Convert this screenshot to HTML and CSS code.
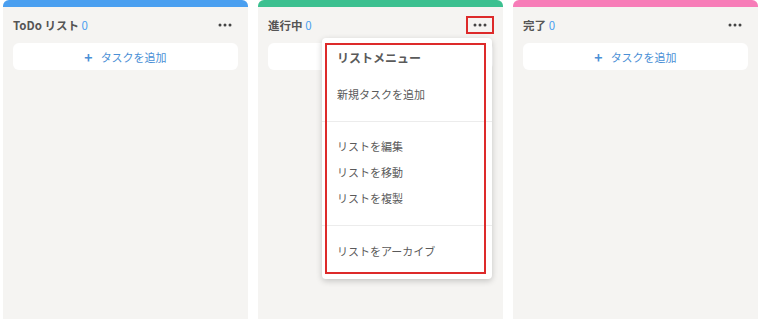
FILE: index.html
```html
<!DOCTYPE html>
<html lang="ja">
<head>
  <meta charset="UTF-8">
  <meta name="viewport" content="width=device-width, initial-scale=1.0">
  <title>ボード</title>
  <link rel="stylesheet" href="styles.css">
</head>
<body>

<div class="board">

  <!-- ToDo -->
  <div class="list list-todo">
    <div class="list-header">
      <span class="list-title">ToDo リスト <span class="count">0</span></span>
      <button class="more-button">
        <svg width="14" height="4" viewBox="0 0 14 4"><circle cx="2" cy="2" r="1.5"/><circle cx="7" cy="2" r="1.5"/><circle cx="12" cy="2" r="1.5"/></svg>
      </button>
    </div>
    <button class="add-task"><span class="plus">+</span>タスクを追加</button>
  </div>

  <!-- 進行中 -->
  <div class="list list-doing">
    <div class="list-header">
      <span class="list-title">進行中 <span class="count">0</span></span>
      <button class="more-button marked">
        <svg width="14" height="4" viewBox="0 0 14 4"><circle cx="2" cy="2" r="1.5"/><circle cx="7" cy="2" r="1.5"/><circle cx="12" cy="2" r="1.5"/></svg>
      </button>
    </div>
    <button class="add-task"><span class="plus">+</span>タスクを追加</button>

    <div class="list-menu">
      <div class="menu-title">リストメニュー</div>
      <div class="menu-section first">
        <div class="menu-item">新規タスクを追加</div>
      </div>
      <div class="menu-section">
        <div class="menu-item">リストを編集</div>
        <div class="menu-item">リストを移動</div>
        <div class="menu-item">リストを複製</div>
      </div>
      <div class="menu-section last">
        <div class="menu-item">リストをアーカイブ</div>
      </div>
      <div class="menu-mark"></div>
    </div>
  </div>

  <!-- 完了 -->
  <div class="list list-done">
    <div class="list-header">
      <span class="list-title">完了 <span class="count">0</span></span>
      <button class="more-button">
        <svg width="14" height="4" viewBox="0 0 14 4"><circle cx="2" cy="2" r="1.5"/><circle cx="7" cy="2" r="1.5"/><circle cx="12" cy="2" r="1.5"/></svg>
      </button>
    </div>
    <button class="add-task"><span class="plus">+</span>タスクを追加</button>
  </div>

</div>

</body>
</html>
```

FILE: styles.css
```css
body {
  font-family: "Noto Sans CJK JP", "Noto Sans", sans-serif;
  margin: 0;
  padding: 0;
  background-color: #ffffff;
  color: #555555;
}

.board {
  display: flex;
  gap: 10px;
  padding-left: 3px;
  height: 100vh;
  overflow: hidden;
}

.list {
  position: relative;
  width: 245px;
  flex-shrink: 0;
  background-color: #f5f4f2;
  border-top: 7px solid #4a9ff0;
  border-radius: 6px 6px 0 0;
  box-sizing: border-box;
}

.list-doing {
  border-top-color: #3cc090;
}

.list-done {
  border-top-color: #f77cb8;
}

.list-header {
  display: flex;
  justify-content: space-between;
  align-items: center;
  height: 36px;
  padding: 0 9px 0 10px;
}

.list-title {
  font-size: 11.5px;
  font-weight: bold;
  color: #555555;
}

.count {
  font-weight: normal;
  color: #4a9ff0;
}

.more-button {
  display: flex;
  align-items: center;
  justify-content: center;
  width: 28px;
  height: 18px;
  padding: 0;
  border: 2px solid transparent;
  background: none;
  fill: #444444;
  cursor: pointer;
}

.more-button.marked {
  border-color: #dd2a2a;
}

.add-task {
  display: flex;
  align-items: center;
  justify-content: center;
  width: 225px;
  height: 27px;
  margin: 0 10px;
  padding: 0;
  border: none;
  border-radius: 6px;
  background-color: #ffffff;
  font-family: inherit;
  font-size: 11px;
  color: #4a8fd6;
  cursor: pointer;
}

.plus {
  font-size: 14px;
  font-weight: bold;
  margin-right: 8px;
  line-height: 1;
}

/* menu opened from the ... button */
.list-menu {
  position: absolute;
  top: 31px;
  left: 64px;
  width: 170px;
  padding: 8px 0 15px;
  background-color: #ffffff;
  border-radius: 4px;
  box-shadow: 0 2px 6px rgba(0, 0, 0, 0.2);
  font-size: 11px;
  color: #5a5a5a;
  z-index: 10;
}

.menu-title {
  padding-left: 15px;
  line-height: 24px;
  font-size: 12px;
  font-weight: bold;
}

.menu-section {
  padding: 11px 0 14px;
  border-bottom: 1px solid #ececec;
}

.menu-section.first {
  padding: 12px 0 15px;
}

.menu-section.first .menu-item {
  line-height: 24px;
}

.menu-section.last {
  border-bottom: none;
  padding: 12px 0 0;
}

.menu-item {
  padding-left: 15px;
  line-height: 26px;
  cursor: pointer;
}

.menu-mark {
  position: absolute;
  top: 5px;
  left: 3px;
  width: 157px;
  height: 227px;
  border: 2px solid #dd2a2a;
  pointer-events: none;
}
```
